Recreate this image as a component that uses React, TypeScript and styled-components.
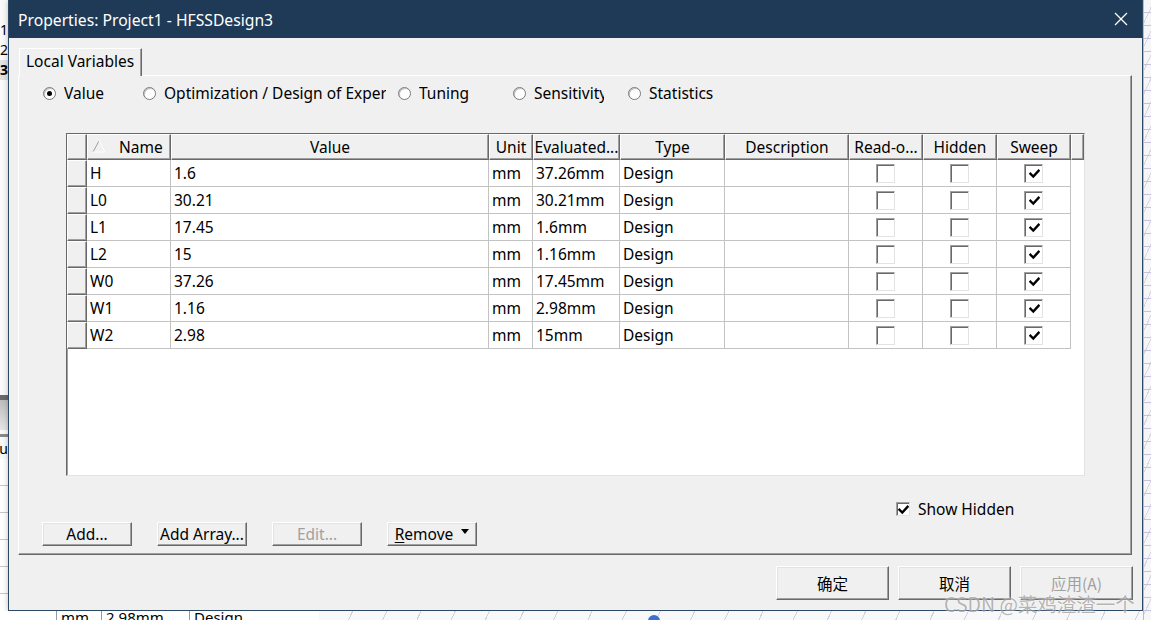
import React from "react";
import styled, { createGlobalStyle } from "styled-components";

const FONT = `"Noto Sans", "Noto Sans CJK SC", sans-serif`;
const CJK = `"Noto Sans CJK SC", "Noto Sans", sans-serif`;
const FS = "15.5px";

const Global = createGlobalStyle`
  html, body { margin: 0; padding: 0; }
  body {
    width: 1151px; height: 620px; overflow: hidden;
    font-family: ${FONT};
    background: #ffffff;
    color: #000;
  }
  * { box-sizing: border-box; }
`;

const Desktop = styled.div`
  position: relative;
  width: 1151px;
  height: 620px;
  display: grid;
  grid-template-columns: 8px 1135px 8px;
  grid-template-rows: 611px 9px;
  overflow: hidden;
`;

/* ---------- background application behind the dialog ---------- */
const LeftStrip = styled.div`
  grid-column: 1;
  grid-row: 1;
  display: flex;
  flex-direction: column;
  background: #fafafa;
  overflow: hidden;
  font-size: 14px;
`;
const StripText = styled.div<{ $top: number; $bold?: boolean; $bg?: string }>`
  margin-top: ${(p) => p.$top}px;
  height: 20px;
  line-height: 20px;
  font-weight: ${(p) => (p.$bold ? 700 : 400)};
  background: ${(p) => p.$bg || "transparent"};
  white-space: nowrap;
  direction: rtl;
`;
const StripBand = styled.div<{ $h: number; $bg: string; $top?: number }>`
  flex: none;
  height: ${(p) => p.$h}px;
  margin-top: ${(p) => p.$top || 0}px;
  background: ${(p) => p.$bg};
`;
const StripLines = styled.div`
  flex: 1;
  background: repeating-linear-gradient(
    to bottom,
    #ffffff 0px,
    #ffffff 26px,
    #c8c8c8 26px,
    #c8c8c8 27px
  );
`;

const RightStrip = styled.div`
  grid-column: 3;
  grid-row: 1 / 3;
  background:
    repeating-linear-gradient(to bottom, transparent 0, transparent 12px, #c3c3dd 12px, #c3c3dd 13px),
    repeating-linear-gradient(115deg, transparent 0, transparent 9px, #d6d6e6 9px, #d6d6e6 10px),
    #f6f6f8;
  border-left: 1px solid #b9b9c9;
`;

const BottomStrip = styled.div`
  grid-column: 1 / 3;
  grid-row: 2;
  overflow: hidden;
  display: flex;
  background: #ffffff;
`;
const BottomCells = styled.div`
  display: flex;
  margin-top: -5px;
  height: 24px;
  padding-left: 56px;
  font-size: 15px;
`;
const BottomCell = styled.div<{ $w: number }>`
  width: ${(p) => p.$w}px;
  padding-left: 4px;
  line-height: 22px;
  border-left: 1px solid #9a9a9a;
`;
const BottomGrid = styled.div`
  flex: 1;
  margin-left: 30px;
  position: relative;
  background:
    repeating-linear-gradient(115deg, transparent 0, transparent 30px, #d0d0e0 30px, #d0d0e0 31px),
    #f8f8fa;
`;
const BlueDot = styled.div`
  position: absolute;
  left: 329px;
  top: 4px;
  width: 12px;
  height: 12px;
  border-radius: 50%;
  background: #3d6fd0;
`;

/* ---------- dialog ---------- */
const Dialog = styled.div`
  grid-column: 2;
  grid-row: 1;
  display: flex;
  flex-direction: column;
  background: #f0f0f0;
  border: 1px solid #2b4865;
  border-top: none;
  box-shadow: 0 0 6px rgba(0, 0, 0, 0.25);
`;

const TitleBar = styled.div`
  flex: none;
  height: 38px;
  background: #1f3a56;
  display: flex;
  align-items: center;
  justify-content: space-between;
  padding: 0 14px 0 9px;
  color: #ffffff;
  font-size: 15.7px;
`;
const TitleText = styled.span`
  margin-top: 1px;
`;

const Body = styled.div`
  flex: 1;
  display: flex;
  flex-direction: column;
  padding: 10px 10px 10px 9px;
`;

const TabStrip = styled.div`
  flex: none;
  height: 27px;
  display: flex;
  padding-left: 1px;
`;
const Tab = styled.div`
  position: relative;
  z-index: 1;
  width: 123px;
  height: 28px;
  background: #f0f0f0;
  border-top: 1px solid #ffffff;
  border-left: 1px solid #ffffff;
  border-right: 1px solid #696969;
  box-shadow: inset -1px 0 #a0a0a0;
  padding-left: 6px;
  font-size: ${FS};
  line-height: 25px;
`;

const Panel = styled.div`
  flex: none;
  height: 480px;
  display: flex;
  flex-direction: column;
  border-top: 1px solid #ffffff;
  border-left: 1px solid #ffffff;
  border-right: 1px solid #696969;
  border-bottom: 1px solid #696969;
  box-shadow: inset -1px -1px #a0a0a0;
`;

const RadioRow = styled.div`
  display: flex;
  align-items: center;
  height: 20px;
  margin-top: 7px;
  padding-left: 24px;
  font-size: ${FS};
`;
const RadioItem = styled.div<{ $w?: number }>`
  display: flex;
  align-items: center;
  gap: 8px;
  width: ${(p) => (p.$w ? `${p.$w}px` : "auto")};
  flex: none;
`;
const RadioCircle = styled.span<{ $on?: boolean }>`
  flex: none;
  width: 13px;
  height: 13px;
  border-radius: 50%;
  background: #ffffff;
  border: 1px solid #7a7a7a;
  box-shadow: inset 1px 1px #c0c0c0;
  display: flex;
  align-items: center;
  justify-content: center;
  &::after {
    content: "";
    display: ${(p) => (p.$on ? "block" : "none")};
    width: 5px;
    height: 5px;
    border-radius: 50%;
    background: #000;
  }
`;
const RadioLabel = styled.span<{ $max?: number }>`
  white-space: nowrap;
  overflow: hidden;
  max-width: ${(p) => (p.$max ? `${p.$max}px` : "none")};
  line-height: 20px;
`;

/* ---------- grid ---------- */
const GridBox = styled.div`
  margin: 30px 0 0 47px;
  width: 1019px;
  height: 343px;
  background: #ffffff;
  border-top: 1px solid #696969;
  border-left: 1px solid #696969;
  border-right: 1px solid #e3e3e3;
  border-bottom: 1px solid #e3e3e3;
  box-shadow: inset 1px 0 #a0a0a0;
  overflow: hidden;
`;

const COLS = "20px 84px 318px 44px 87px 105px 124px 74px 74px 74px 13px";

const Row = styled.div<{ $h: number }>`
  display: grid;
  grid-template-columns: ${COLS};
  height: ${(p) => p.$h}px;
`;

const HeadCell = styled.div<{ $left?: boolean }>`
  background: #f0f0f0;
  border-top: 1px solid #ffffff;
  border-left: 1px solid #ffffff;
  border-right: 1px solid #696969;
  border-bottom: 1px solid #696969;
  box-shadow: inset -1px -1px #a0a0a0;
  font-size: ${FS};
  display: flex;
  align-items: center;
  justify-content: ${(p) => (p.$left ? "flex-start" : "center")};
  padding-left: ${(p) => (p.$left ? "4px" : "0")};
  padding-bottom: 1px;
  gap: 13px;
  white-space: nowrap;
  overflow: hidden;
`;

const RowHead = styled.div`
  background: #f0f0f0;
  border-top: 1px solid #ffffff;
  border-left: 1px solid #ffffff;
  border-right: 1px solid #696969;
  border-bottom: 1px solid #696969;
  box-shadow: inset -1px -1px #a0a0a0;
`;

const Cell = styled.div<{ $center?: boolean }>`
  background: #ffffff;
  border-right: 1px solid #c3c3c3;
  border-bottom: 1px solid #c3c3c3;
  font-size: ${FS};
  padding-left: ${(p) => (p.$center ? "0" : "3px")};
  display: flex;
  align-items: center;
  justify-content: ${(p) => (p.$center ? "center" : "flex-start")};
  white-space: nowrap;
  overflow: hidden;
`;

const Blank = styled.div``;

const CheckBox = styled.span<{ $size: number }>`
  width: ${(p) => p.$size}px;
  height: ${(p) => p.$size}px;
  background: #ffffff;
  border-top: 1px solid #a0a0a0;
  border-left: 1px solid #a0a0a0;
  border-right: 1px solid #e3e3e3;
  border-bottom: 1px solid #e3e3e3;
  box-shadow: inset 1px 1px #696969;
  display: flex;
  align-items: center;
  justify-content: center;
  padding: 1px 0 0 1px;
`;

const Check = () => (
  <svg width="11" height="10" viewBox="0 0 11 10">
    <path
      d="M1.5 4.8 L4.3 7.6 L9.6 1.8"
      stroke="#000"
      strokeWidth="2.4"
      fill="none"
      strokeLinecap="square"
    />
  </svg>
);

const SortTri = () => (
  <svg width="14" height="13" viewBox="0 0 14 13">
    <path d="M1 12 L7 1" stroke="#a0a0a0" strokeWidth="1" fill="none" />
    <path d="M7 1 L13 12 L1 12" stroke="#ffffff" strokeWidth="1" fill="none" />
  </svg>
);

/* ---------- below grid ---------- */
const ShowHiddenRow = styled.div`
  display: flex;
  align-items: center;
  gap: 8px;
  margin-top: 26px;
  padding-left: 877px;
  height: 14px;
  font-size: ${FS};
`;

const ButtonRow = styled.div`
  display: flex;
  gap: 25px;
  margin-top: 6px;
  padding-left: 23px;
`;

const Button = styled.div<{ $w: number; $h: number; $disabled?: boolean; $cjk?: boolean }>`
  width: ${(p) => p.$w}px;
  height: ${(p) => p.$h}px;
  background: #f0f0f0;
  border-top: 1px solid #ffffff;
  border-left: 1px solid #ffffff;
  border-right: 1px solid #696969;
  border-bottom: 1px solid #696969;
  box-shadow: inset -1px -1px #a0a0a0, inset 1px 1px #e3e3e3;
  display: flex;
  align-items: center;
  justify-content: center;
  gap: 8px;
  font-family: ${(p) => (p.$cjk ? CJK : FONT)};
  font-size: ${FS};
  color: ${(p) => (p.$disabled ? "#a0a0a0" : "#000")};
  white-space: nowrap;
`;
const Under = styled.span`
  text-decoration: underline;
  text-underline-offset: 2px;
`;
const DropArrow = styled.span`
  width: 0;
  height: 0;
  border-left: 4px solid transparent;
  border-right: 4px solid transparent;
  border-top: 5px solid #000;
  margin-top: -5px;
`;

const DialogButtons = styled.div`
  display: flex;
  justify-content: flex-end;
  gap: 9px;
  margin-top: 11px;
  margin-right: -1px;
`;

const Watermark = styled.div`
  position: absolute;
  left: 944px;
  top: 589px;
  font-family: ${CJK};
  font-size: 19.5px;
  color: rgba(120, 120, 120, 0.55);
  text-shadow: 0 0 2px rgba(255, 255, 255, 0.9);
  white-space: nowrap;
  pointer-events: none;
`;

const CloseIcon = () => (
  <svg width="14" height="14" viewBox="0 0 14 14">
    <path d="M1 1 L13 13 M13 1 L1 13" stroke="#ffffff" strokeWidth="1.3" />
  </svg>
);

type Var = { name: string; value: string; evald: string };
const vars: Var[] = [
  { name: "H", value: "1.6", evald: "37.26mm" },
  { name: "L0", value: "30.21", evald: "30.21mm" },
  { name: "L1", value: "17.45", evald: "1.6mm" },
  { name: "L2", value: "15", evald: "1.16mm" },
  { name: "W0", value: "37.26", evald: "17.45mm" },
  { name: "W1", value: "1.16", evald: "2.98mm" },
  { name: "W2", value: "2.98", evald: "15mm" },
];

export default function App() {
  return (
    <>
      <Global />
      <Desktop>
        <LeftStrip>
          <StripText $top={20}>1</StripText>
          <StripText $top={0}>2</StripText>
          <StripText $top={0} $bold $bg="#e4e4e4">n3</StripText>
          <StripBand $top={315} $h={5} $bg="#6a6a6a" />
          <StripBand $h={30} $bg="linear-gradient(#bdbdbd, #e6e6e6)" />
          <StripBand $top={4} $h={3} $bg="#8a8a8a" />
          <StripText $top={2}>u</StripText>
          <StripLines />
        </LeftStrip>

        <Dialog>
          <TitleBar>
            <TitleText>Properties: Project1 - HFSSDesign3</TitleText>
            <CloseIcon />
          </TitleBar>
          <Body>
            <TabStrip>
              <Tab>Local Variables</Tab>
            </TabStrip>
            <Panel>
              <RadioRow>
                <RadioItem $w={100}>
                  <RadioCircle $on />
                  <RadioLabel>Value</RadioLabel>
                </RadioItem>
                <RadioItem $w={255}>
                  <RadioCircle />
                  <RadioLabel $max={222}>Optimization / Design of Experiments</RadioLabel>
                </RadioItem>
                <RadioItem $w={115}>
                  <RadioCircle />
                  <RadioLabel>Tuning</RadioLabel>
                </RadioItem>
                <RadioItem $w={115}>
                  <RadioCircle />
                  <RadioLabel $max={70}>Sensitivity</RadioLabel>
                </RadioItem>
                <RadioItem>
                  <RadioCircle />
                  <RadioLabel>Statistics</RadioLabel>
                </RadioItem>
              </RadioRow>

              <GridBox>
                <Row $h={26}>
                  <HeadCell />
                  <HeadCell $left>
                    <SortTri />
                    <span>Name</span>
                  </HeadCell>
                  <HeadCell>Value</HeadCell>
                  <HeadCell>Unit</HeadCell>
                  <HeadCell>Evaluated...</HeadCell>
                  <HeadCell>Type</HeadCell>
                  <HeadCell>Description</HeadCell>
                  <HeadCell>Read-o...</HeadCell>
                  <HeadCell>Hidden</HeadCell>
                  <HeadCell>Sweep</HeadCell>
                  <HeadCell />
                </Row>
                {vars.map((v) => (
                  <Row $h={27} key={v.name}>
                    <RowHead />
                    <Cell>{v.name}</Cell>
                    <Cell>{v.value}</Cell>
                    <Cell>mm</Cell>
                    <Cell>{v.evald}</Cell>
                    <Cell>Design</Cell>
                    <Cell />
                    <Cell $center>
                      <CheckBox $size={19} />
                    </Cell>
                    <Cell $center>
                      <CheckBox $size={19} />
                    </Cell>
                    <Cell $center>
                      <CheckBox $size={19}>
                        <Check />
                      </CheckBox>
                    </Cell>
                    <Blank />
                  </Row>
                ))}
              </GridBox>

              <ShowHiddenRow>
                <CheckBox $size={14}>
                  <Check />
                </CheckBox>
                <span>Show Hidden</span>
              </ShowHiddenRow>

              <ButtonRow>
                <Button $w={90} $h={24}>Add...</Button>
                <Button $w={90} $h={24}>Add Array...</Button>
                <Button $w={90} $h={24} $disabled>Edit...</Button>
                <Button $w={90} $h={24}>
                  <span>
                    <Under>R</Under>emove
                  </span>
                  <DropArrow />
                </Button>
              </ButtonRow>
            </Panel>

            <DialogButtons>
              <Button $w={113} $h={34} $cjk>确定</Button>
              <Button $w={113} $h={34} $cjk>取消</Button>
              <Button $w={113} $h={34} $cjk $disabled>应用(A)</Button>
            </DialogButtons>
          </Body>
        </Dialog>

        <RightStrip />

        <BottomStrip>
          <BottomCells>
            <BottomCell $w={45}>mm</BottomCell>
            <BottomCell $w={88}>2.98mm</BottomCell>
            <BottomCell $w={100}>Design</BottomCell>
          </BottomCells>
          <BottomGrid>
            <BlueDot />
          </BottomGrid>
        </BottomStrip>

        <Watermark>CSDN @菜鸡渣渣一个</Watermark>
      </Desktop>
    </>
  );
}
